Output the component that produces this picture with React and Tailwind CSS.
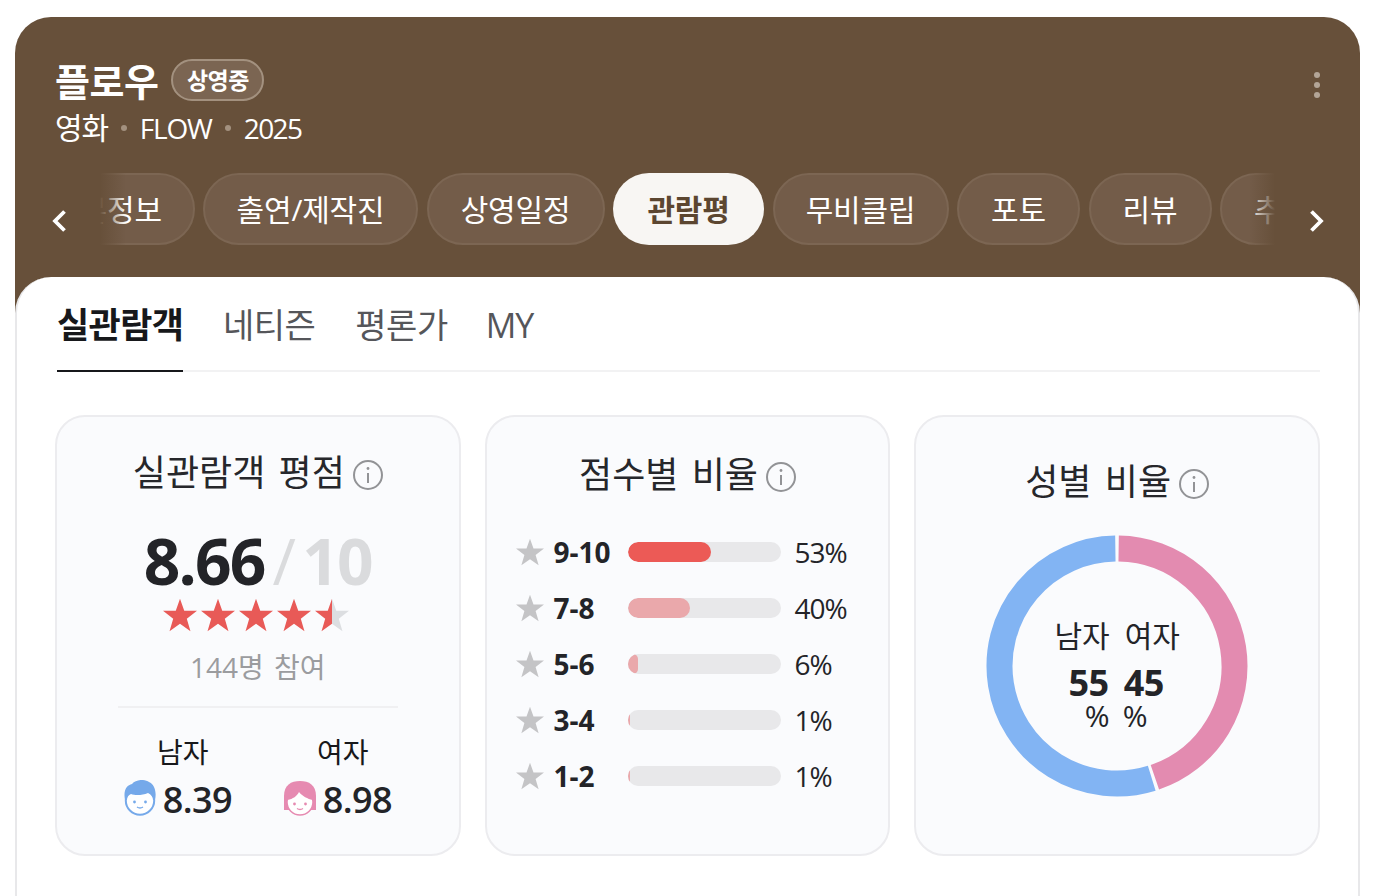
const FONT = '"Open Sans","Noto Sans CJK KR",sans-serif';

function Star({ size = 34, fill = "#e85a57", half = false, id }) {
  return (
    <svg width={size} height={size} viewBox="0 0 24 24" className="shrink-0">
      {half && (
        <defs>
          <linearGradient id={id} x1="0" x2="1" y1="0" y2="0">
            <stop offset="50%" stopColor="#e85a57" />
            <stop offset="50%" stopColor="#dcdee1" />
          </linearGradient>
        </defs>
      )}
      <polygon
        points="12,0.6 15,9 24,9 16.8,14.6 19.4,23.4 12,18.2 4.6,23.4 7.2,14.6 0,9 9,9"
        fill={half ? `url(#${id})` : fill}
      />
    </svg>
  );
}

function Info() {
  return (
    <svg width="30" height="30" viewBox="0 0 30 30" fill="none" className="shrink-0 mt-[4px]">
      <circle cx="15" cy="15" r="14" stroke="#929396" strokeWidth="2" />
      <line x1="15" y1="13" x2="15" y2="23" stroke="#929396" strokeWidth="2" />
      <circle cx="15" cy="8.5" r="1.4" fill="#929396" />
    </svg>
  );
}

function Boy() {
  return (
    <svg width="32" height="36" viewBox="0 0 32 36" className="shrink-0 mt-[-4px]">
      <circle cx="16" cy="20.5" r="14.2" fill="#fff" stroke="#75a9ea" strokeWidth="2" />
      <path d="M1 20C-1 10 3 5 8 4C12 -1 21 -1 25 2C30 4 33 11 31 20L29 20C29 17 27 14.5 24 13C18 15.5 11 15.5 7 14C4.5 15 3 17 3 20Z" fill="#75a9ea" />
      <circle cx="10.5" cy="22" r="1.4" fill="#75a9ea" />
      <circle cx="21.5" cy="22" r="1.4" fill="#75a9ea" />
      <path d="M13 27Q16 29 19 27" stroke="#75a9ea" strokeWidth="1.4" fill="none" />
    </svg>
  );
}

function Girl() {
  return (
    <svg width="32" height="36" viewBox="0 0 32 36" className="shrink-0 mt-[-4px]">
      <path d="M0 30L0 16C0 5 7 1 16 1C25 1 32 5 32 16L32 30L26 30L6 30Z" fill="#e68ab1" />
      <circle cx="16" cy="22" r="13" fill="#fff" stroke="#e68ab1" strokeWidth="1.5" />
      <path d="M3.5 20C9 19 13 16 15 12C18 16 24 19 28.5 20C28 11 22 7 16 7C10 7 4 11 3.5 20Z" fill="#e68ab1" />
      <circle cx="10.5" cy="24" r="1.4" fill="#e68ab1" />
      <circle cx="21.5" cy="24" r="1.4" fill="#e68ab1" />
      <path d="M13 28.5Q16 30.5 19 28.5" stroke="#e68ab1" strokeWidth="1.4" fill="none" />
    </svg>
  );
}

function Chevron({ dir }) {
  return (
    <svg width="16" height="24" viewBox="0 0 16 24" fill="none" className="shrink-0 mt-[23px]">
      <path d={dir === "l" ? "M13.5 2.5L4 12L13.5 21.5" : "M2.5 2.5L12 12L2.5 21.5"} stroke="#fff" strokeWidth="3.8" />
    </svg>
  );
}

const tabs = [
  ["기본정보", "w-[175px]"],
  ["출연/제작진", "w-[215px]"],
  ["상영일정", "w-[178px]"],
  ["관람평", "w-[151px]"],
  ["무비클립", "w-[176px]"],
  ["포토", "w-[123px]"],
  ["리뷰", "w-[123px]"],
  ["추천", "w-[123px]"],
];

const rows = [
  ["9-10", "53%", "w-[54%]", "bg-[#ec5a56]"],
  ["7-8", "40%", "w-[40.5%]", "bg-[#eaa8ab]"],
  ["5-6", "6%", "w-[6%]", "bg-[#eaa8ab]"],
  ["3-4", "1%", "w-[1.2%]", "bg-[#eaa8ab]"],
  ["1-2", "1%", "w-[1.2%]", "bg-[#eaa8ab]"],
];

function Card({ children, className = "" }) {
  return (
    <div className={`h-[441px] rounded-[30px] border-2 border-[#ececef] bg-[#fafbfd] flex flex-col items-center ${className}`}>
      {children}
    </div>
  );
}

function Title({ text }) {
  return (
    <div className="flex items-center gap-[8px] text-[36px] leading-[44px] text-[#26272b] [word-spacing:4px]">
      <span>{text}</span>
      <Info />
    </div>
  );
}

function Donut() {
  const arc = (a, b) => {
    const p = (t) => [131 + 117.5 * Math.sin(t), 131 - 117.5 * Math.cos(t)];
    const [x1, y1] = p(a);
    const [x2, y2] = p(b);
    return `M${x1} ${y1}A117.5 117.5 0 ${b - a > Math.PI ? 1 : 0} 1 ${x2} ${y2}`;
  };
  const g = 0.014;
  const split = 0.45 * 2 * Math.PI;
  return (
    <svg width="262" height="262" viewBox="0 0 262 262" fill="none">
      <path d={arc(g, split - g)} stroke="#e38bb0" strokeWidth="26" />
      <path d={arc(split + g, 2 * Math.PI - g)} stroke="#82b4f3" strokeWidth="26" />
    </svg>
  );
}

export default function App() {
  return (
    <div className="h-[896px] overflow-hidden bg-white pt-[17px] px-[15px] pr-[14px]" style={{ fontFamily: FONT }}>
      <div className="rounded-t-[36px] bg-[#67503a] h-[900px]">
        <div className="h-[260px] relative">
          <div className="pl-[40px] pr-[40px] pt-[42px] flex items-start justify-between">
            <div>
              <div className="flex items-center h-[44px]">
                <span className="text-[38px] leading-[44px] font-bold text-white tracking-[-0.5px]">플로우</span>
                <span className="ml-[13px] mt-[-2px] h-[42px] w-[93px] rounded-full border-2 border-[#a3917f] bg-[#7b6552] text-white text-[23px] font-bold flex items-center justify-center tracking-[-0.5px]">상영중</span>
              </div>
              <div className="mt-[5px] flex items-center text-[28px] leading-[40px] text-white tracking-[-1.2px]">
                <span className="text-[30px]">영화</span>
                <span className="mx-[13px] w-[6px] h-[6px] rounded-full bg-[#a3917f]" />
                <span>FLOW</span>
                <span className="mx-[13px] w-[6px] h-[6px] rounded-full bg-[#a3917f]" />
                <span className="tracking-[-1.6px]">2025</span>
              </div>
            </div>
            <div className="flex flex-col gap-[4px] mt-[13px]">
              <span className="w-[6px] h-[6px] rounded-full bg-[#b3a597]" />
              <span className="w-[6px] h-[6px] rounded-full bg-[#b3a597]" />
              <span className="w-[6px] h-[6px] rounded-full bg-[#b3a597]" />
            </div>
          </div>
          <div className="mt-[25px] flex items-center">
            <div className="w-[85px] flex justify-end pr-[33px]"><Chevron dir="l" /></div>
            <div className="relative w-[1175px] overflow-hidden">
              <div className="flex gap-[8.5px] ml-[-80.5px]">
                {tabs.map(([t, w]) => {
                  const active = t === "관람평";
                  return (
                    <div
                      key={t}
                      className={`${w} h-[72px] shrink-0 rounded-full flex items-center justify-center text-[30px] tracking-[-0.2px] ${
                        active
                          ? "bg-[#f8f6f3] text-[#5c4630] font-bold"
                          : "bg-[#735c49] border-2 border-[#7c6653] text-white"
                      }`}
                    >
                      {t}
                    </div>
                  );
                })}
              </div>
              <div className="absolute inset-y-0 left-0 w-[26px] bg-gradient-to-r from-[#67503a] to-transparent" />
              <div className="absolute inset-y-0 right-0 w-[26px] bg-gradient-to-l from-[#67503a] to-transparent" />
            </div>
            <div className="flex-1 flex justify-start pl-[34px]"><Chevron dir="r" /></div>
          </div>
        </div>

        <div className="h-[640px] bg-white rounded-t-[36px] border-x-2 border-t-0 border-[#e8e8ea] pl-[40px] pr-[38px]">
          <div className="flex gap-[40px] h-[95px] border-b-2 border-[#f2f2f3] text-[34px]">
            <div className="h-[95px] w-[126px] pt-[24px] leading-[48px] text-[35px] font-bold text-[#17181b] tracking-[-0.6px] whitespace-nowrap border-b-2 border-[#17181b]">실관람객</div>
            <div className="pt-[24px] leading-[48px] text-[#55565a] tracking-[-0.5px]">네티즌</div>
            <div className="pt-[24px] leading-[48px] text-[#55565a] tracking-[-0.5px]">평론가</div>
            <div className="pt-[24px] leading-[48px] text-[#55565a] tracking-[-1px] -ml-[2px]">MY</div>
          </div>

          <div className="grid grid-cols-3 gap-[24px] mt-[43px] ml-[-2px]">
            <Card className="pt-[34px]">
              <Title text="실관람객 평점" />
              <div className="mt-[31px] flex items-baseline h-[70px] leading-[70px] text-[64px] font-bold tracking-[-1.8px]">
                <span className="text-[#232428]">8.66</span>
                <span className="text-[#dadbdd] ml-[8px] font-normal">/</span>
                <span className="text-[#dadbdd] ml-[8px]">10</span>
              </div>
              <div className="flex gap-[4px] mt-[2px] ml-[-3px]">
                <Star id="a" />
                <Star id="b" />
                <Star id="c" />
                <Star id="d" />
                <Star half id="half" />
              </div>
              <div className="mt-[15px] text-[28px] leading-[40px] text-[#9b9c9f] tracking-[0px] [word-spacing:3px]">144명 참여</div>
              <div className="mt-[19px] w-[280px] h-[2px] bg-[#f0f0f2]" />
              <div className="mt-[24px] w-[320px] flex">
                <div className="flex flex-col items-center w-[160px]">
                  <span className="text-[28px] leading-[40px] text-[#17181b] ml-[10px]">남자</span>
                  <div className="flex items-center gap-[7px] mt-[4px]">
                    <Boy />
                    <span className="text-[36px] leading-[48px] font-semibold text-[#232428] tracking-[-0.6px]">8.39</span>
                  </div>
                </div>
                <div className="flex flex-col items-center w-[160px]">
                  <span className="text-[28px] leading-[40px] text-[#17181b] ml-[10px]">여자</span>
                  <div className="flex items-center gap-[7px] mt-[4px]">
                    <Girl />
                    <span className="text-[36px] leading-[48px] font-semibold text-[#232428] tracking-[-0.6px]">8.98</span>
                  </div>
                </div>
              </div>
            </Card>

            <Card className="pt-[36px]">
              <Title text="점수별 비율" />
              <div className="mt-[35px] flex flex-col gap-[16px] w-[342px]">
                {rows.map(([l, p, w, c]) => (
                  <div key={l} className="flex items-center h-[40px]">
                    <Star size={28} fill="#c4c4c6" id={l} />
                    <span className="ml-[9px] w-[75px] text-[28px] font-bold text-[#232428]">{l}</span>
                    <div className="w-[153px] h-[20px] rounded-full bg-[#e8e8ea] overflow-hidden">
                      <div className={`${w} h-full rounded-full ${c}`} />
                    </div>
                    <span className="ml-[13px] text-[28px] text-[#232428] tracking-[-1px]">{p}</span>
                  </div>
                ))}
              </div>
            </Card>

            <Card className="pt-[43px]">
              <Title text="성별 비율" />
              <div className="relative mt-[31px]">
                <Donut />
                <div className="absolute inset-0 flex items-center justify-center gap-[15px] pt-[10px] text-[#232428]">
                  <div className="flex flex-col items-end">
                    <span className="text-[30px] leading-[40px]">남자</span>
                    <span className="text-[36px] leading-[46px] font-bold mt-[4px] tracking-[-0.5px] mr-[1px]">55</span>
                    <span className="text-[30px] leading-[20px]">%</span>
                  </div>
                  <div className="flex flex-col items-start">
                    <span className="text-[30px] leading-[40px]">여자</span>
                    <span className="text-[36px] leading-[46px] font-bold mt-[4px] tracking-[-0.5px] ml-[-1px]">45</span>
                    <span className="text-[30px] leading-[20px] ml-[-2px]">%</span>
                  </div>
                </div>
              </div>
            </Card>
          </div>
        </div>
      </div>
    </div>
  );
}
